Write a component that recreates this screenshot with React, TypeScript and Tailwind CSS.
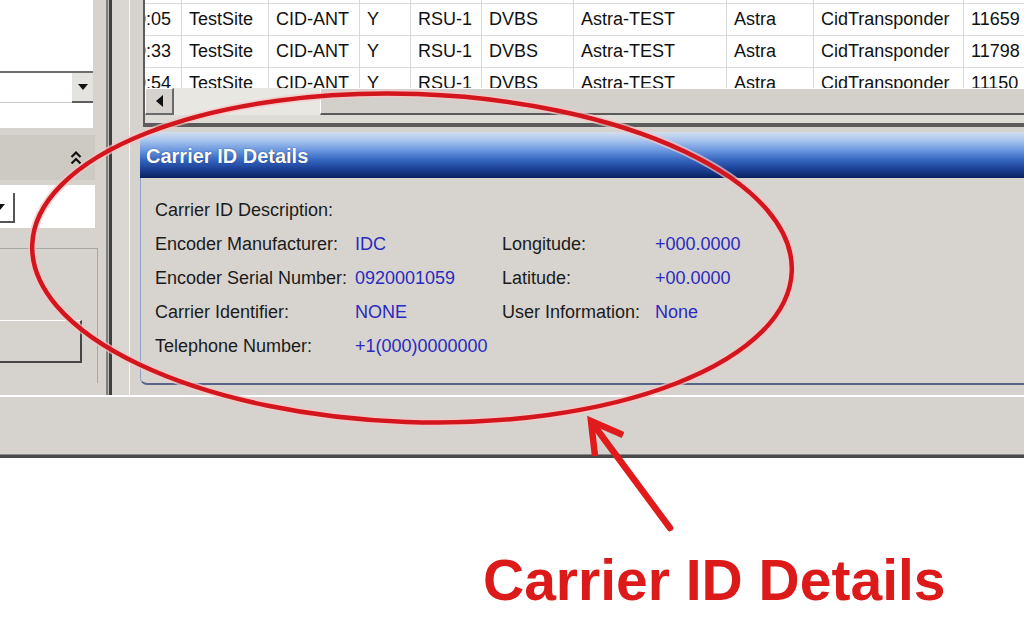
import React from 'react';

const gridRows = [
  ['', '', '', '', '', '', '', '', '', ''],
  ['10:05', 'TestSite', 'CID-ANT', 'Y', 'RSU-1', 'DVBS', 'Astra-TEST', 'Astra', 'CidTransponder', '11659'],
  ['10:33', 'TestSite', 'CID-ANT', 'Y', 'RSU-1', 'DVBS', 'Astra-TEST', 'Astra', 'CidTransponder', '11798'],
  ['10:54', 'TestSite', 'CID-ANT', 'Y', 'RSU-1', 'DVBS', 'Astra-TEST', 'Astra', 'CidTransponder', '11150'],
];

const details: [string, string, string, string][] = [
  ['Carrier ID Description:', '', '', ''],
  ['Encoder Manufacturer:', 'IDC', 'Longitude:', '+000.0000'],
  ['Encoder Serial Number:', '0920001059', 'Latitude:', '+00.0000'],
  ['Carrier Identifier:', 'NONE', 'User Information:', 'None'],
  ['Telephone Number:', '+1(000)0000000', '', ''],
];

function DownArrow({ className = '' }: { className?: string }) {
  return (
    <svg width="10" height="6" viewBox="0 0 10 6" className={className}>
      <polygon points="0,0 10,0 5,6" fill="#111" />
    </svg>
  );
}

function LeftPanel() {
  return (
    <div className="w-[100px] shrink-0 flex flex-col">
      {/* top list + combo */}
      <div className="w-[93px] h-[128px] bg-white flex flex-col">
        <div className="h-[71px]" />
        <div className="h-[2px] bg-[#6e6e6e]" />
        <div className="h-[30px] flex">
          <div className="flex-1 border-b border-[#c8c8c8]" />
          <div className="w-[21px] bg-[#e4e3e0] border-b-2 border-[#5e5e5e] flex items-center justify-center">
            <DownArrow />
          </div>
        </div>
      </div>
      <div className="h-[7px]" />
      {/* collapsible header */}
      <div className="h-[45px] w-[95px] bg-[#cdcac4] flex items-center justify-end pr-[13px]">
        <svg width="12" height="16" viewBox="0 0 12 16">
          <path d="M1.5 7 L6 2.5 L10.5 7 M1.5 13.5 L6 9 L10.5 13.5" stroke="#111" strokeWidth="2.2" fill="none" />
        </svg>
      </div>
      <div className="h-[5px]" />
      <div className="h-[43px] w-[95px] bg-white pt-[8px]">
        <div className="w-[15px] h-[30px] border-r-2 border-b-2 border-[#555] flex items-center overflow-hidden">
          <DownArrow className="-ml-[5px]" />
        </div>
      </div>
      <div className="h-[20px]" />
      <div className="h-[135px] w-[98px] border-t border-r border-[#a9a7a2] pt-[71px]">
        <div className="w-[82px] h-[43px] border-t border-white border-r-2 border-b-2 border-r-[#454545] border-b-[#454545]" />
      </div>
    </div>
  );
}

function Splitter() {
  return (
    <div className="w-[40px] shrink-0 flex">
      <div className="w-[6px]" />
      <div className="w-[2px] bg-[#7d7d7d]" />
      <div className="w-[1px] bg-[#bdbab4]" />
      <div className="w-[3px] bg-[#3f3f3f]" />
      <div className="w-[17px] bg-[#dad7d2]" />
      <div className="w-[1px] bg-[#f4f3f1]" />
    </div>
  );
}

function DataGrid() {
  return (
    <div className="h-[127px] pl-[3px] flex">
      <div className="flex-1 min-w-0 flex flex-col border-l-2 border-b-[4px] border-[#5c5c5c] overflow-hidden">
        <div className="h-[88px] bg-white overflow-hidden">
          <div className="-mt-[28px]">
            {gridRows.map((r, i) => (
              <div
                key={i}
                className="grid grid-cols-[37px_87px_91px_51px_71px_92px_153px_87px_150px_110px] h-[32px] border-b border-[#d9d9d9]"
              >
                {r.map((c, j) => (
                  <div
                    key={j}
                    className={`flex items-center overflow-hidden whitespace-nowrap border-r border-[#d9d9d9] ${j === 0 ? '' : 'pl-[7px]'}`}
                  >
                    <span className={j === 0 ? '-ml-[19px]' : ''}>{c}</span>
                  </div>
                ))}
              </div>
            ))}
          </div>
        </div>
        {/* horizontal scroll bar */}
        <div className="h-[27px] bg-[#e9e7e2] flex">
          <div className="w-[29px] shrink-0 bg-[#d6d3ce] border-t border-l border-white border-r-2 border-b-2 border-r-[#6a6a6a] border-b-[#6a6a6a] flex items-center justify-center">
            <svg width="7" height="12" viewBox="0 0 7 12">
              <polygon points="7,0 7,12 0,6" fill="#111" />
            </svg>
          </div>
          <div className="w-[146px] shrink-0" />
          <div className="flex-1 bg-[#d3d0cb] border-t border-l border-white border-b-2 border-b-[#5a5a5a]" />
        </div>
        <div className="flex-1 bg-[#dedcd7]" />
      </div>
    </div>
  );
}

function DetailsPanel() {
  return (
    <div className="h-[253px] flex flex-col">
      <div className="h-[46px] rounded-tl-[4px] bg-[linear-gradient(to_bottom,#d3deec_0%,#a9c5ee_18%,#6f9be0_38%,#3767c2_60%,#1d4196_80%,#0a2262_100%)] flex items-center pl-[6px] pt-[2px]">
        <span className="text-white font-bold text-[20px] [text-shadow:0_0_1px_#0a2262]">Carrier ID Details</span>
      </div>
      <div className="flex-1 bg-[#d7d4cf] border-l border-[#8fa3c6] border-b-2 border-b-[#57648c] rounded-bl-[7px] pl-[14px] pt-[15px]">
        <div className="grid grid-cols-[200px_147px_153px_1fr]">
          {details.map((d, i) => (
            <React.Fragment key={i}>
              <div className="h-[34px] flex items-center text-[#1b1b1b] whitespace-nowrap">{d[0]}</div>
              <div className="h-[34px] flex items-center text-[#2a2ac0] whitespace-nowrap">{d[1]}</div>
              <div className="h-[34px] flex items-center text-[#1b1b1b] whitespace-nowrap">{d[2]}</div>
              <div className="h-[34px] flex items-center text-[#2a2ac0] whitespace-nowrap">{d[3]}</div>
            </React.Fragment>
          ))}
        </div>
      </div>
    </div>
  );
}

function Annotation() {
  return (
    <svg className="absolute inset-0 pointer-events-none" width="1024" height="628" viewBox="0 0 1024 628">
      <g transform="rotate(2 412 258)">
        <ellipse cx="412" cy="258" rx="380" ry="164" fill="none" stroke="#f7c4c4" strokeWidth="8" opacity="0.7" />
        <ellipse cx="412" cy="258" rx="380" ry="164" fill="none" stroke="#d3161d" strokeWidth="4.5" />
      </g>
      <g stroke="#e11b1b" strokeWidth="6.5" fill="none" strokeLinecap="round">
        <line x1="670" y1="528" x2="593" y2="424" />
        <polyline points="595,456 591,421 623,435" strokeLinejoin="miter" strokeLinecap="butt" />
      </g>
    </svg>
  );
}

export default function App() {
  return (
    <div className="relative w-[1024px] h-[628px] overflow-hidden bg-white font-['Liberation_Sans',Arial,sans-serif] text-[18px] text-[#111]">
      <div className="h-[458px] bg-[#d6d3ce] flex flex-col">
        <div className="h-[395px] flex">
          <LeftPanel />
          <Splitter />
          <div className="flex-1 min-w-0 flex flex-col">
            <DataGrid />
            <div className="h-[5px]" />
            <DetailsPanel />
          </div>
        </div>
        <div className="h-[2px] bg-white" />
        <div className="flex-1" />
        <div className="h-[1px] bg-[#8a8a8a]" />
        <div className="h-[3px] bg-[#4a4a4a]" />
      </div>
      <div className="pt-[94px] pl-[483px]">
        <span className="text-[57px] leading-none font-bold text-[#dd1a1a]">Carrier ID Details</span>
      </div>
      <Annotation />
    </div>
  );
}
